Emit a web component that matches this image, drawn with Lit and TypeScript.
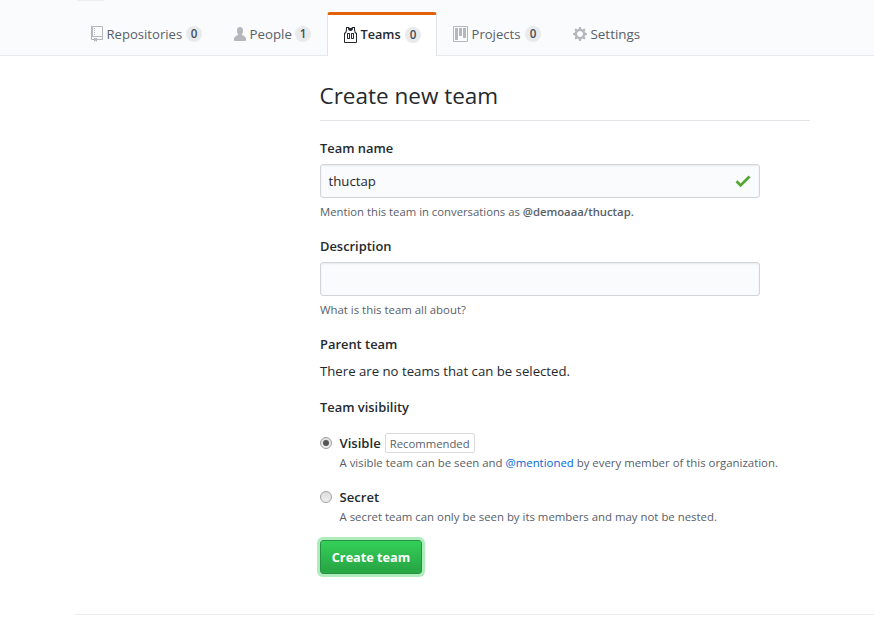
import { LitElement, html, css, svg } from "lit";
import { customElement } from "lit/decorators.js";

const icons: Record<string, { w: number; d: string }> = {
  repo: { w: 12, d: "M4 9H3V8h1v1zm0-3H3v1h1V6zm0-2H3v1h1V4zm0-2H3v1h1V2zm8-1v12c0 .55-.45 1-1 1H6v2l-1.5-1.5L3 16v-2H1c-.55 0-1-.45-1-1V1c0-.55.45-1 1-1h10c.55 0 1 .45 1 1zm-1 10H1v2h2v-1h3v1h5v-2zm0-10H2v9h9V1z" },
  person: { w: 12, d: "M12 14.002a.998.998 0 0 1-.998.998H1.001A1 1 0 0 1 0 13.999V13c0-2.633 4-4 4-4s.229-.409 0-1c-.841-.62-.944-1.59-1-4 .173-2.413 1.867-3 3-3s2.827.586 3 3c-.056 2.41-.159 3.38-1 4-.229.59 0 1 0 1s4 1.367 4 4v1.002z" },
  jersey: { w: 14, d: "M4.5 6l-.5.5v5l.5.5h2l.5-.5v-5L6.5 6h-2zM6 11H5V7h1v4zm6.27-7.25C12.05 2.37 11.96 1.12 12 0H9.02c0 .27-.13.48-.39.69-.25.2-.63.3-1.13.3-.5 0-.88-.09-1.13-.3-.23-.2-.36-.42-.37-.69H3c.05 1.13-.03 2.38-.25 3.75C2.55 5.13 1.95 5.88 1 6v9c.02.27.11.48.31.69.2.21.42.3.69.31h11c.27-.02.48-.11.69-.31.21-.2.3-.42.31-.69V6c-.95-.13-1.53-.88-1.75-2.25h.02zM13 15H2V7c.89-.5 1.48-1.25 1.72-2.25S4.03 2.5 4 1h1c-.02.78.16 1.47.52 2.06.36.58 1.02.89 2 .94.98-.02 1.64-.33 2-.94.36-.59.5-1.28.48-2.06h1c.02 1.42.13 2.55.33 3.38.2.81.69 2 1.67 2.63v8V15zM8.5 6l-.5.5v5l.5.5h2l.5-.5v-5l-.5-.5h-2zm1.5 5H9V7h1v4z" },
  project: { w: 15, d: "M10 12h3V2h-3v10zm-4-2h3V2H6v8zm-4 4h3V2H2v12zm-1 1h13V1H1v14zM14 0H1a1 1 0 0 0-1 1v14a1 1 0 0 0 1 1h13a1 1 0 0 0 1-1V1a1 1 0 0 0-1-1z" },
  gear: { w: 14, d: "M14 8.77v-1.6l-1.94-.64-.45-1.09.88-1.84-1.13-1.13-1.81.91-1.09-.45-.69-1.92h-1.6l-.63 1.94-1.11.45-1.84-.88-1.13 1.13.91 1.81-.45 1.09L0 7.23v1.59l1.94.64.45 1.09-.88 1.84 1.13 1.13 1.81-.91 1.09.45.69 1.92h1.59l.63-1.94 1.11-.45 1.84.88 1.13-1.13-.92-1.81.47-1.09L14 8.75v.02zM7 11c-1.66 0-3-1.34-3-3s1.34-3 3-3 3 1.34 3 3-1.34 3-3 3z" },
};

const tabs = [
  { id: "repositories", label: "Repositories", icon: "repo", count: "0" },
  { id: "people", label: "People", icon: "person", count: "1" },
  { id: "teams", label: "Teams", icon: "jersey", count: "0" },
  { id: "projects", label: "Projects", icon: "project", count: "0" },
  { id: "settings", label: "Settings", icon: "gear", count: "" },
];

@customElement("app-root")
export class AppRoot extends LitElement {
  static styles = css`
    :host { display: block; height: 625px; overflow: hidden; background: #fff; color: #24292e;
      font: 13.2px/21px "Open Sans", "Noto Sans", sans-serif; }
    * { box-sizing: border-box; }
    .page { display: flex; flex-direction: column; height: 625px; white-space: nowrap; }
    header { height: 56px; flex: none; background: #fafbfc; border-bottom: 1px solid #e8eaed; padding-left: 75px; }
    .remnant { width: 27px; height: 1px; margin-left: 2px; background: #eceef0; }
    nav { display: flex; margin-top: 11px; height: 44px; }
    .tab { display: flex; align-items: center; height: 44px; padding: 0 16px; color: #586069; }
    .repositories { width: 143px; }
    .people { width: 109px; }
    .teams { width: 110px; padding: 0 15px 2px; background: #fff; color: #24292e; font-weight: 600;
      border: 1px solid #e1e4e8; border-top: 3px solid #e36209; border-bottom: 0; border-radius: 3px 3px 0 0; }
    .projects { width: 120px; }
    .tab svg { flex: none; margin-right: 3.5px; fill: #b4b8bc; }
    .teams svg { fill: #24292e; }
    .repositories .label { font-size: 13.1px; }
    .people .label { font-size: 13.3px; }
    .teams .label { font-size: 12.7px; }
    .projects .label { font-size: 13.1px; }
    .settings .label { font-size: 13.4px; }
    .count { margin-left: auto; min-width: 16px; height: 16px; padding: 0 4px; border-radius: 10px; text-align: center;
      background: #e8eaec; color: #444d56; font-size: 11.6px; line-height: 16px; font-weight: 600; }
    main { width: 490px; margin-left: 320px; flex: none; height: 558px; }
    h1 { margin: 0; height: 65px; padding-top: 22px; border-bottom: 1px solid #e1e4e8; font-size: 22.5px; line-height: 36px; font-weight: 400; }
    .title-text { display: inline-block; margin-left: -0.5px; }
    .field { height: 98px; }
    .first { margin-top: 17px; }
    .name { display: block; height: 26px; font-size: 12.9px; font-weight: 600; }
    .input { display: flex; align-items: center; width: 440px; height: 34px; padding: 0 8px; border: 1px solid #d1d5da;
      border-radius: 3px; background: #fafbfc; box-shadow: inset 0 1px 2px rgba(27,31,35,.075); }
    .value { margin-left: -0.5px; }
    .check { margin-left: auto; }
    .note { height: 18px; color: #586069; font-size: 11.4px; line-height: 18px; }
    .field .note { margin-top: 5px; }
    .mention { font-size: 11.3px; }
    b { font-weight: 600; }
    .choice { display: flex; height: 54px; }
    .choice .note { margin-top: 1px; }
    .radio { width: 12px; height: 12px; margin: 4px 7.5px 0 0; border: 1px solid #a0a0a0; border-radius: 50%;
      background: linear-gradient(#dedede, #eee); display: grid; place-items: center; flex: none; }
    .dot { width: 6px; height: 6px; border-radius: 50%; background: #555; }
    .line { display: flex; align-items: center; height: 20px; font-size: 13.1px; font-weight: 600; }
    .badge { margin-left: 4px; height: 20px; width: 90px; text-align: center; border: 1px solid #d9dbde; border-radius: 2px;
      color: #586069; font-size: 11.3px; line-height: 19px; font-weight: 400; }
    .link { color: #0366d6; }
    .parent { height: 27px; font-size: 12.9px; font-weight: 600; }
    .none { height: 36px; }
    .vis { height: 36px; font-size: 12.9px; font-weight: 600; }
    button { display: block; width: 102px; height: 34px; margin-top: -1px; padding: 0; border: 1px solid #279143; border-radius: 3px;
      background: linear-gradient(#34d058, #28a745 90%); box-shadow: 0 0 0 3px rgba(52,208,88,.4);
      color: #fff; font: 700 12.7px/20px "Open Sans", "Noto Sans", sans-serif; white-space: nowrap; }
    footer { height: 11px; margin-left: 75px; border-top: 1px solid #eaecef; }
  `;

  private icon(name: string) {
    const i = icons[name];
    return html`<svg width=${i.w} height="16" viewBox="0 0 ${i.w} 16">${svg`<path fill-rule="evenodd" d=${i.d}></path>`}</svg>`;
  }

  render() {
    return html`<div class="page">
      <header>
        <div class="remnant"></div>
        <nav>${tabs.map(t => html`<div class="tab ${t.id}">${this.icon(t.icon)}<span class="label">${t.label}</span>${t.count ? html`<span class="count">${t.count}</span>` : ""}</div>`)}</nav>
      </header>
      <main>
        <h1><span class="title-text">Create new team</span></h1>
        <div class="field first">
          <label class="name">Team name</label>
          <div class="input"><span class="value">thuctap</span>
            <svg class="check" width="16" height="13" viewBox="0 0 16 13"><path fill="#55a532" d="M13.5.5 15.5 2.5 5.6 12.3.5 7.3l2-2 3.1 3.1z"></path></svg>
          </div>
          <div class="note"><span class="mention">Mention this team in conversations as <b>@demoaaa/thuctap.</b></span></div>
        </div>
        <div class="field">
          <label class="name">Description</label>
          <div class="input"></div>
          <div class="note">What is this team all about?</div>
        </div>
        <div class="parent">Parent team</div>
        <div class="none">There are no teams that can be selected.</div>
        <div class="vis">Team visibility</div>
        <div class="choice">
          <span class="radio"><span class="dot"></span></span>
          <div><div class="line"><span>Visible</span><span class="badge">Recommended</span></div>
          <div class="note">A visible team can be seen and <span class="link">@mentioned</span> by every member of this organization.</div></div>
        </div>
        <div class="choice">
          <span class="radio"></span>
          <div><div class="line"><span>Secret</span></div>
          <div class="note">A secret team can only be seen by its members and may not be nested.</div></div>
        </div>
        <button>Create team</button>
      </main>
      <footer></footer>
    </div>`;
  }
}
